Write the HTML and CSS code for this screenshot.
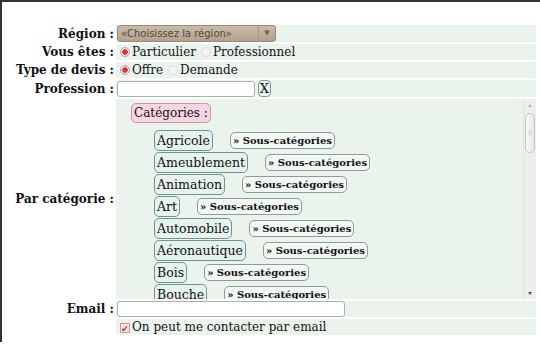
FILE: index.html
```html
<!DOCTYPE html>
<html lang="fr">
<head>
    <meta charset="UTF-8">
    <title>Demande de devis</title>
    <link rel="stylesheet" href="styles.css">
</head>
<body>
<div class="cadre">
    <table class="formulaire">
        <tr>
            <th>Région :</th>
            <td>
                <div class="choix-region">
                    <span>«Choisissez la région»</span>
                    <span class="fleche">▼</span>
                </div>
            </td>
        </tr>
        <tr>
            <th>Vous êtes :</th>
            <td>
                <label><span class="radio coche"></span>Particulier</label>
                <label><span class="radio"></span>Professionnel</label>
            </td>
        </tr>
        <tr>
            <th>Type de devis :</th>
            <td>
                <label><span class="radio coche"></span>Offre</label>
                <label><span class="radio"></span>Demande</label>
            </td>
        </tr>
        <tr>
            <th>Profession :</th>
            <td>
                <input type="text" class="champ-profession">
                <span class="effacer">X</span>
            </td>
        </tr>
        <tr>
            <th>Par catégorie :</th>
            <td class="cellule-categories">
                <div class="zone-categories">
                    <div class="liste-categories">
                        <span class="titre-categories">Catégories :</span>
                        <ul>
                            <li><span class="categorie">Agricole</span><span class="sous">» Sous-catégories</span></li>
                            <li><span class="categorie">Ameublement</span><span class="sous">» Sous-catégories</span></li>
                            <li><span class="categorie">Animation</span><span class="sous">» Sous-catégories</span></li>
                            <li><span class="categorie">Art</span><span class="sous">» Sous-catégories</span></li>
                            <li><span class="categorie">Automobile</span><span class="sous">» Sous-catégories</span></li>
                            <li><span class="categorie">Aéronautique</span><span class="sous">» Sous-catégories</span></li>
                            <li><span class="categorie">Bois</span><span class="sous">» Sous-catégories</span></li>
                            <li><span class="categorie">Bouche</span><span class="sous">» Sous-catégories</span></li>
                            <li><span class="categorie">Bâtiment</span><span class="sous">» Sous-catégories</span></li>
                        </ul>
                    </div>
                    <div class="barre-defilement">
                        <svg class="bouton-haut" width="12" height="12" viewBox="0 0 12 12"><path d="M4 8L6 5L8 8z" fill="#b4b4b0"/></svg>
                        <div class="piste">
                            <div class="poignee">
                                <svg width="10" height="8" viewBox="0 0 10 8"><path d="M3 1.5H7M3 4H7M3 6.5H7" stroke="#c4c4c0" stroke-width="1"/></svg>
                            </div>
                        </div>
                        <svg class="bouton-bas" width="12" height="12" viewBox="0 0 12 12"><path d="M4 5H8L6 8z" fill="#505050"/></svg>
                    </div>
                </div>
            </td>
        </tr>
        <tr>
            <th>Email :</th>
            <td><input type="text" class="champ-email"></td>
        </tr>
        <tr>
            <th></th>
            <td><label><span class="case coche">✔</span>On peut me contacter par email</label></td>
        </tr>
    </table>
</div>
</body>
</html>
```

FILE: styles.css
```css
body {
    margin: 0;
    background-color: white;
    font-family: "DejaVu Serif", serif;
    font-size: 12px;
    color: #111;
}

.cadre {
    border-top: 2px solid #333;
    border-left: 2px solid #333;
    height: 342px;
    padding-top: 21px;
    box-sizing: border-box;
    overflow: hidden;
}

.formulaire {
    border-collapse: separate;
    border-spacing: 0 2px;
    width: 534px;
}

.formulaire th {
    width: 112px;
    text-align: right;
    font-size: 12px;
    font-weight: bold;
    padding: 0 2px 0 0;
    white-space: nowrap;
    vertical-align: middle;
}

.formulaire td {
    background-color: #eaf4ec;
    padding: 0 0 0 1px;
    height: 16px;
    white-space: nowrap;
    font-size: 12px;
}

.choix-region {
    display: inline-flex;
    justify-content: space-between;
    align-items: center;
    width: 157px;
    height: 15px;
    border: 1px solid #9a8a78;
    border-radius: 3px;
    background: linear-gradient(#c9baa8, #b3a18d);
    font-family: "DejaVu Sans", sans-serif;
    font-size: 10px;
    color: #54483c;
    vertical-align: middle;
}

.choix-region span:first-child {
    padding-left: 3px;
}

.fleche {
    border-left: 1px solid #a59581;
    width: 16px;
    text-align: center;
    font-size: 7px;
    color: #6c5f50;
    line-height: 15px;
}

.radio {
    display: inline-block;
    width: 10px;
    height: 10px;
    border-radius: 50%;
    background: #f4f4f2;
    border: 1px solid #dcdcd8;
    margin: 0 2px 0 3px;
    vertical-align: -1px;
    box-sizing: border-box;
}

label + label .radio {
    margin-left: 1px;
}

.radio.coche {
    background: radial-gradient(circle, #d03a3a 0 2.5px, #f6e2e2 3px);
    border-color: #c79a9a;
}

input[type="text"] {
    height: 16px;
    border: 1px solid #a9b3ad;
    border-radius: 3px;
    background: white;
    padding: 0;
    margin: 0;
    box-sizing: border-box;
    vertical-align: middle;
}

.champ-profession {
    width: 138px;
}

.champ-email {
    width: 228px;
}

.effacer {
    display: inline-block;
    border: 1px solid #7f9a98;
    border-radius: 4px;
    padding: 0 1px;
    line-height: 15px;
    font-size: 13px;
    margin-left: -1px;
    vertical-align: middle;
}

.cellule-categories {
    padding: 0;
}

.zone-categories {
    display: flex;
    height: 200px;
}

.liste-categories {
    flex: 1;
    overflow: hidden;
    padding-left: 14px;
}

.barre-defilement {
    width: 12px;
    display: flex;
    flex-direction: column;
    background-color: #eeeeea;
    border-left: 1px solid #e2e2de;
}

.bouton-haut, .bouton-bas {
    display: block;
    flex: none;
}

.piste {
    flex: 1;
    padding-top: 2px;
}

.poignee {
    height: 38px;
    margin: 0 1px;
    border: 1px solid #c4c4c0;
    border-radius: 5px;
    background: linear-gradient(to right, #fbfbf9, #e6e6e2);
    display: flex;
    align-items: center;
    justify-content: center;
}

.poignee svg {
    display: block;
}

.titre-categories {
    display: inline-block;
    margin-top: 4px;
    background-color: #f8d4e4;
    border: 1px solid #c49aaa;
    border-radius: 5px;
    padding: 1px 2px;
    line-height: 16px;
    font-size: 12px;
}

ul {
    list-style: none;
    margin: 6px 0 0 0;
    padding: 0 0 0 23px;
}

li {
    height: 22px;
    display: flex;
    align-items: center;
}

.categorie {
    border: 1px solid #6f9494;
    border-radius: 5px;
    background-color: #e6f2ee;
    padding: 1px 2px;
    line-height: 17px;
    font-size: 12.5px;
}

.sous {
    margin-left: 17px;
    border: 1px solid #8c9c98;
    border-radius: 5px;
    background-color: #f2f8f4;
    font-size: 10px;
    font-weight: bold;
    padding: 1px 2px;
    line-height: 13px;
}

.case {
    display: inline-block;
    width: 10px;
    height: 10px;
    background: #f6e4e4;
    border: 1px solid #c79a9a;
    color: #c83030;
    font-size: 9px;
    line-height: 10px;
    text-align: center;
    box-sizing: border-box;
    margin: 0 2px 0 3px;
    vertical-align: -1px;
}
```
